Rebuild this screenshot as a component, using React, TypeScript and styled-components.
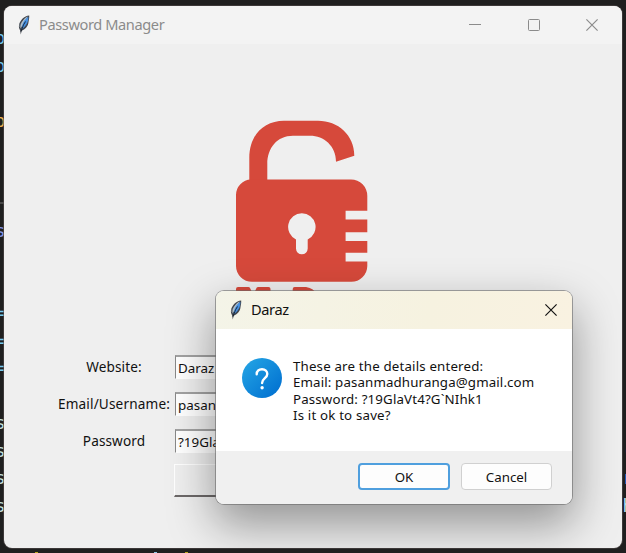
import React from 'react';
import styled, { createGlobalStyle } from 'styled-components';

const GlobalStyle = createGlobalStyle`
  *, *::before, *::after { box-sizing: border-box; }
  body { margin: 0; background: #1f1f1f; overflow: hidden; }
`;

const uiFont = '"Noto Sans", "Open Sans", sans-serif';

const Desktop = styled.div`
  width: 626px;
  height: 553px;
  display: grid;
  grid-template-columns: 4px 618px 4px;
  grid-template-rows: 6px 542px 5px;
  background: #1f1f1f;
  overflow: hidden;
`;

const Gutter = styled.div<{ $side: 'left' | 'right' }>`
  grid-row: 2;
  grid-column: ${(p) => (p.$side === 'left' ? 1 : 3)};
  display: flex;
  flex-direction: column;
  padding-top: 18px;
  overflow: hidden;
  min-width: 0;
`;

const CodeLine = styled.div<{ $color: string; $side: 'left' | 'right' }>`
  flex: 0 0 27.5px;
  display: flex;
  justify-content: ${(p) => (p.$side === 'left' ? 'flex-end' : 'flex-start')};
  align-items: center;
  margin-right: ${(p) => (p.$side === 'left' ? '-1.5px' : '0')};
  padding-left: ${(p) => (p.$side === 'right' ? '0.5px' : '0')};
  font: 18px/27px "DejaVu Sans Mono", monospace;
  color: ${(p) => p.$color};
`;

const CodeRule = styled.div`
  flex: 0 0 27.5px;
  display: flex;
  align-items: center;
  &::before { content: ''; width: 4px; height: 2px; background: #484848; }
`;

const BottomStrip = styled.div`
  grid-row: 3;
  grid-column: 1 / 4;
  display: flex;
  align-items: flex-end;
  padding-left: 35px;
`;

const GlyphTip = styled.span<{ $gap: number; $color: string }>`
  width: 3px;
  height: 1px;
  margin-right: ${(p) => p.$gap}px;
  background: ${(p) => p.$color};
`;

const AppWindow = styled.main`
  grid-row: 2;
  grid-column: 2;
  position: relative;
  display: flex;
  flex-direction: column;
  border-radius: 8px;
  overflow: hidden;
  background: #efefef;
  font-family: ${uiFont};
  box-shadow: 0 0 0 1px rgba(80, 74, 74, 0.6);
`;

const TitleBar = styled.header<{ $active?: boolean }>`
  display: flex;
  align-items: center;
  flex: none;
  height: 38px;
  padding: 0 ${(p) => (p.$active ? 15 : 20)}px 0 13px;
  background: ${(p) => (p.$active ? 'linear-gradient(100deg, #f4f4e8 0%, #f6f2e0 60%, #f9f2e1 100%)' : '#f3f3f3')};
  color: ${(p) => (p.$active ? '#111' : '#8b8b8b')};
`;

const Title = styled.h1<{ $tracking: number }>`
  flex: 1;
  margin: 0 0 0 8px;
  padding-bottom: 2px;
  font-size: 14.6px;
  font-weight: 400;
  line-height: 20px;
  letter-spacing: ${(p) => p.$tracking}px;
  white-space: nowrap;
`;

const Controls = styled.div`
  display: flex;
  gap: 46.500px;
  padding-right: 4px;
`;

const ControlButton = styled.button`
  display: block;
  width: 12px;
  height: 12px;
  padding: 0;
  border: 0;
  background: none;
  color: inherit;
  & svg { display: block; }
`;

const LogoArea = styled.div`
  flex: none;
  height: 300px;
  padding: 71px 0 0 226px;
`;

const Form = styled.form`
  display: grid;
  grid-template-columns: 116px 300px;
  grid-template-rows: 24px 24px 24px 32px;
  column-gap: 3px;
  row-gap: 13px;
  margin-left: 52px;
  padding-top: 11px;
`;

const Label = styled.label<{ $tracking: number }>`
  display: flex;
  align-items: center;
  justify-content: center;
  font-size: 13.6px;
  line-height: 18px;
  letter-spacing: ${(p) => p.$tracking}px;
  color: #111;
  white-space: nowrap;
`;

const Field = styled.div<{ $tracking: number }>`
  display: flex;
  align-items: center;
  padding-left: 2px;
  border: 1px solid #fff;
  border-top: 2px solid #a2a2a2;
  border-left: 1px solid #888;
  background: #fff;
  font-size: 13.4px;
  line-height: 18px;
  letter-spacing: ${(p) => p.$tracking}px;
  color: #111;
`;

const AddButton = styled.button`
  grid-column: 2;
  margin: -2px 0 0 -1px;
  height: 33px;
  border: 1px solid #fff;
  border-bottom: 2px solid #6c6868;
  background: #efefef;
`;

const Dialog = styled.section`
  position: absolute;
  left: 212px;
  top: 285px;
  width: 356px;
  height: 213px;
  display: flex;
  flex-direction: column;
  border-radius: 8px;
  background: #fff;
  box-shadow: 0 0 0 1px rgba(105, 105, 105, 0.6), 0 19px 46px 2px rgba(0, 0, 0, 0.38);
  & > header { border-radius: 8px 8px 0 0; }
`;

const DialogBody = styled.div`
  flex: 1;
  display: flex;
  gap: 11px;
  padding: 29px 0 0 26px;
`;

const Message = styled.div`
  font-size: 13.3px;
  line-height: 16.3px;
  color: #111;
`;

const MessageLine = styled.p<{ $tracking: number }>`
  margin: 0;
  letter-spacing: ${(p) => p.$tracking}px;
  white-space: nowrap;
`;

const DialogFooter = styled.footer`
  display: flex;
  justify-content: flex-end;
  align-items: flex-start;
  gap: 11px;
  height: 53px;
  padding: 12px 20px 0 0;
  border-radius: 0 0 8px 8px;
  background: #f0f0f0;
`;

const DialogButton = styled.button<{ $primary?: boolean }>`
  width: ${(p) => (p.$primary ? 92 : 91)}px;
  height: 27px;
  padding: 1px 0 0;
  border: ${(p) => (p.$primary ? '2px solid #4f9fde' : '1px solid #d0d0d0')};
  border-radius: 4px;
  background: #fdfdfd;
  font: 13.3px/18px ${uiFont};
  letter-spacing: 0;
  color: #111;
`;

const Feather = () => (
  <svg width="14" height="20" viewBox="0 0 14 20">
    <path d="M12.200.5C7.500.9 2.200 5.600 1.900 11c0 1.700.4 3 1.200 4.300l.7 4.200.9-3.800c4-1.600 6.500-4.700 6.800-8.400.2-2.500.9-3.500.7-6.800Z" fill="#41454d" />
    <path d="M10.800 1.500C7.800 2.700 4.300 6.500 3.500 10.600L3.300 13.500l3.900-5Z" fill="#b3c0ca" />
    <path d="M11.300 1.800C11.600 7 9.200 11.200 4.700 14.200 4.700 9.300 7.200 4.600 11.300 1.800Z" fill="#4590e2" />
    <path d="M8.500 6.500 6.500 9.900 4 16.500" fill="none" stroke="#15202d" strokeWidth=".9" />
    <path d="M3 8.500 2.800 12" stroke="#8b949c" strokeWidth=".8" />
  </svg>
);

const CloseIcon = () => (
  <svg width="12" height="12" viewBox="0 0 12 12">
    <path d="M.4.4 11.6 11.6M11.6.4.4 11.6" stroke="currentColor" strokeWidth="1.15" />
  </svg>
);

const Padlock = () => (
  <svg width="150" height="190" viewBox="0 0 150 190">
    <g fill="#d6493b">
      <path d="M19.300 67V43C19.300 20 34 5.700 54 5.700H88C108 5.700 124.300 20 124.300 40.700L106 46.700C106 31 94 20.700 80 20.700H63C47 20.700 37.300 33 37.300 49V67Z" />
      <path
        fillRule="evenodd"
        d="M21 64.500H121A16.300 16.300 0 0 1 137.300 81V95.700H115.600V104.500H137.300V117.200H115.600V126H137.300V137.700H115.600V146.500H137.300V151A16 16 0 0 1 121 166.800H22A16 16 0 0 1 6 151V80A15.500 15.500 0 0 1 21 64.500ZM71.800 98.300A13.700 13.700 0 0 0 66 124.400V133.500A5.850 5.850 0 0 0 77.700 133.500V124.400A13.700 13.700 0 0 0 71.800 98.300Z"
      />
      <path d="M6 174Q6 172 8 172H18.500Q20 172 20.500 174L23.300 180L26 174Q26.600 172 28 172H38.500Q40.500 172 40.500 174V190H6ZM62.700 174Q62.700 172 64.700 172H76Q84 173 87 180V190H62.700Z" />
    </g>
  </svg>
);

const QuestionIcon = () => (
  <svg width="40" height="40" viewBox="0 0 40 40">
    <defs>
      <linearGradient id="questionFill" x1="0" y1="0" x2="1" y2="1">
        <stop offset="0.1" stopColor="#22a1e3" />
        <stop offset="0.95" stopColor="#006fd0" />
      </linearGradient>
    </defs>
    <circle cx="20" cy="20" r="20" fill="url(#questionFill)" />
    <path d="M14.7 16.200C14.700 13 17 11.200 20 11.200C23.200 11.200 25.300 13.200 25.300 15.900C25.300 20 20.100 20.300 20.100 25" fill="none" stroke="#fff" strokeWidth="2.400" strokeLinecap="round" />
    <circle cx="20.100" cy="29.800" r="1.700" fill="#fff" />
  </svg>
);

const leftLines: [string, string][] = [
  ['o', '#70c5e8'], ['o', '#70c5e8'], ['', ''], ['o', '#edb351'], ['', ''], ['', ''], ['rule', ''],
  ['s', '#8497e8'], ['', ''], ['', ''], ['=', '#76c9ed'], ['=', '#76c9ed'], ['=', '#76c9ed'], ['', ''],
  ['s', '#c5dfdb'], ['s', '#c5dfdb'], ['s', '#c5dfdb'], ['s', '#c5dfdb'],
];

const rightLines: [string, string][] = [
  ...Array.from({ length: 15 }, () => ['', ''] as [string, string]),
  ['(', '#27239a'], ['r', '#4ebcf0'], ['h', '#b6dff2'],
];

export default function App() {
  return (
    <>
      <GlobalStyle />
      <Desktop>
        <Gutter $side="left">
          {leftLines.map(([glyph, color], i) =>
            glyph === 'rule' ? <CodeRule key={i} /> : <CodeLine key={i} $side="left" $color={color}>{glyph}</CodeLine>
          )}
        </Gutter>

        <AppWindow>
          <TitleBar>
            <Feather />
            <Title $tracking={-0.4}>Password Manager</Title>
            <Controls>
              <ControlButton aria-label="Minimize">
                <svg width="12" height="12"><path d="M0 5.500H12" stroke="currentColor" /></svg>
              </ControlButton>
              <ControlButton aria-label="Maximize">
                <svg width="12" height="12"><rect x=".5" y=".5" width="11" height="11" rx="1" fill="none" stroke="currentColor" /></svg>
              </ControlButton>
              <ControlButton aria-label="Close"><CloseIcon /></ControlButton>
            </Controls>
          </TitleBar>

          <LogoArea><Padlock /></LogoArea>

          <Form>
            <Label $tracking={0.1}>Website:</Label>
            <Field $tracking={0}>Daraz</Field>
            <Label $tracking={0.15}>Email/Username:</Label>
            <Field $tracking={0}>pasanmadhuranga@gmail.com</Field>
            <Label $tracking={0.1}>Password</Label>
            <Field $tracking={0}>?19GlaVt4?G`NIhk1</Field>
            <AddButton type="button" />
          </Form>

          <Dialog role="dialog">
            <TitleBar $active>
              <Feather />
              <Title $tracking={-0.4}>Daraz</Title>
              <ControlButton aria-label="Close dialog"><CloseIcon /></ControlButton>
            </TitleBar>
            <DialogBody>
              <QuestionIcon />
              <Message>
                <MessageLine $tracking={0.17}>These are the details entered:</MessageLine>
                <MessageLine $tracking={0.13}>Email: pasanmadhuranga@gmail.com</MessageLine>
                <MessageLine $tracking={0.15}>Password: ?19GlaVt4?G`NIhk1</MessageLine>
                <MessageLine $tracking={0.17}>Is it ok to save?</MessageLine>
              </Message>
            </DialogBody>
            <DialogFooter>
              <DialogButton $primary>OK</DialogButton>
              <DialogButton>Cancel</DialogButton>
            </DialogFooter>
          </Dialog>
        </AppWindow>

        <Gutter $side="right">
          {rightLines.map(([glyph, color], i) => (
            <CodeLine key={i} $side="right" $color={color}>{glyph}</CodeLine>
          ))}
        </Gutter>

        <BottomStrip>
          <GlyphTip $gap={116} $color="#b9a51c" />
          <GlyphTip $gap={28} $color="#8ec5e6" />
          <GlyphTip $gap={0} $color="#b9a51c" />
        </BottomStrip>
      </Desktop>
    </>
  );
}
